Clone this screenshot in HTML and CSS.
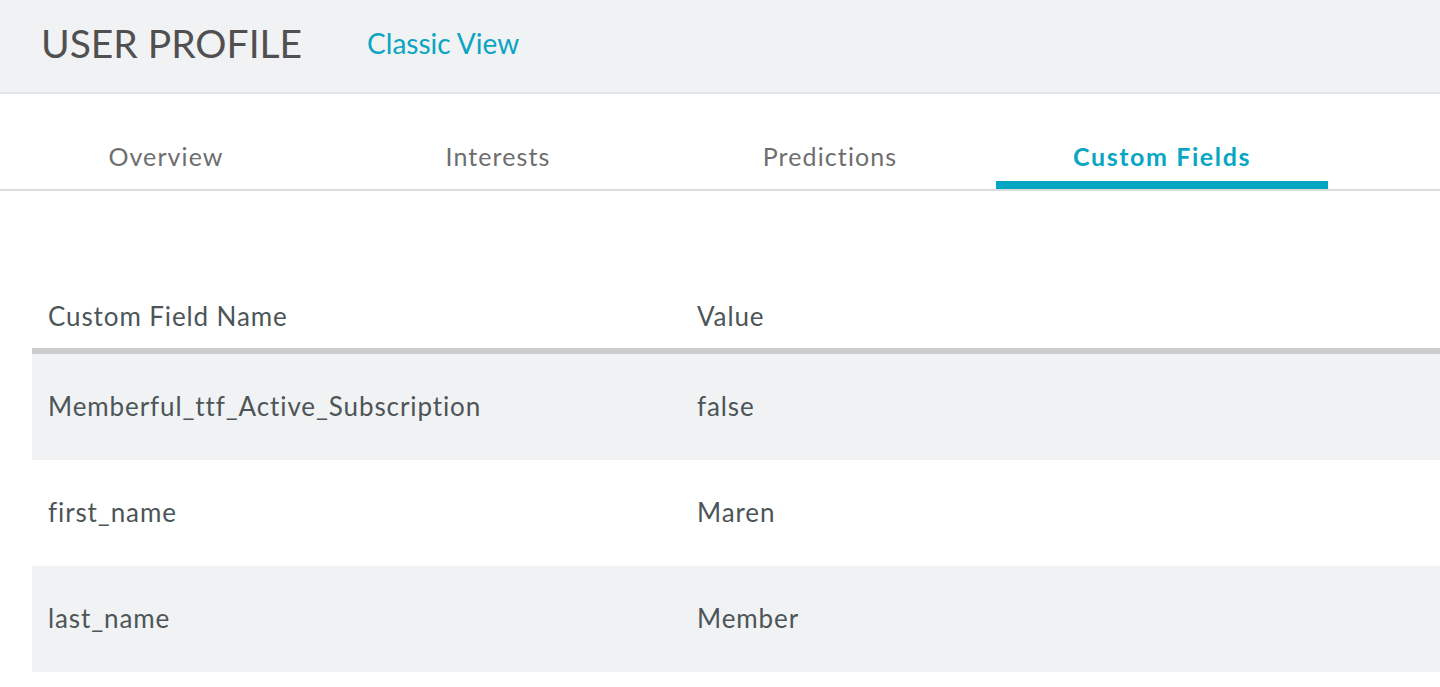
FILE: index.html
```html
<!DOCTYPE html>
<html>
<head>
<meta charset="utf-8">
<link rel="stylesheet" href="styles.css">
</head>
<body>
<header class="header">
  <h1 class="title">USER PROFILE</h1>
  <a class="classic" href="#">Classic View</a>
</header>
<nav class="tabs">
  <div class="tab">Overview</div>
  <div class="tab">Interests</div>
  <div class="tab">Predictions</div>
  <div class="tab active">Custom Fields</div>
</nav>
<section class="table">
  <div class="row head">
    <div class="cell">Custom Field Name</div>
    <div class="cell">Value</div>
  </div>
  <div class="row shade">
    <div class="cell">Memberful_ttf_Active_Subscription</div>
    <div class="cell">false</div>
  </div>
  <div class="row">
    <div class="cell">first_name</div>
    <div class="cell">Maren</div>
  </div>
  <div class="row shade">
    <div class="cell">last_name</div>
    <div class="cell">Member</div>
  </div>
</section>
</body>
</html>
```
FILE: styles.css
```css
html, body {
  margin: 0;
  padding: 0;
  background: #ffffff;
  font-family: "Lato", "Open Sans", sans-serif;
}
.header {
  height: 94px;
  box-sizing: border-box;
  background: #f1f2f4;
  border-bottom: 2px solid #e2e3e5;
  display: flex;
  align-items: center;
  padding: 0 0 6px 41px;
}
.title {
  margin: 0;
  font-size: 39px;
  line-height: 44px;
  font-weight: 400;
  color: #505050;
}
.classic {
  margin-left: 65px;
  font-size: 28px;
  line-height: 34px;
  color: #0aa5c2;
  text-decoration: none;
}
.tabs {
  display: flex;
  border-bottom: 2px solid #dcdcdc;
}
.tab {
  width: 332px;
  height: 95px;
  box-sizing: border-box;
  padding-top: 47px;
  line-height: 30px;
  font-size: 25px;
  letter-spacing: 1.1px;
  color: #6e6e6e;
  text-align: center;
  border-bottom: 8px solid transparent;
}
.tab.active {
  color: #07a6c2;
  font-weight: 700;
  letter-spacing: 1.6px;
  border-bottom-color: #05a6c1;
}
.table {
  margin: 90px 0 0 32px;
  color: #4c5558;
  font-size: 26px;
  letter-spacing: 0.9px;
}
.row {
  display: grid;
  grid-template-columns: 649px 1fr;
  height: 106px;
  align-items: center;
}
.row.head {
  align-items: start;
  padding-top: 22px;
  box-sizing: border-box;
  border-bottom: 6px solid #cccccc;
  height: 73px;
}
.row.shade {
  background: #f1f2f4;
}
.cell {
  padding-left: 16px;
  line-height: 30px;
  margin-top: -2px;
}
```
